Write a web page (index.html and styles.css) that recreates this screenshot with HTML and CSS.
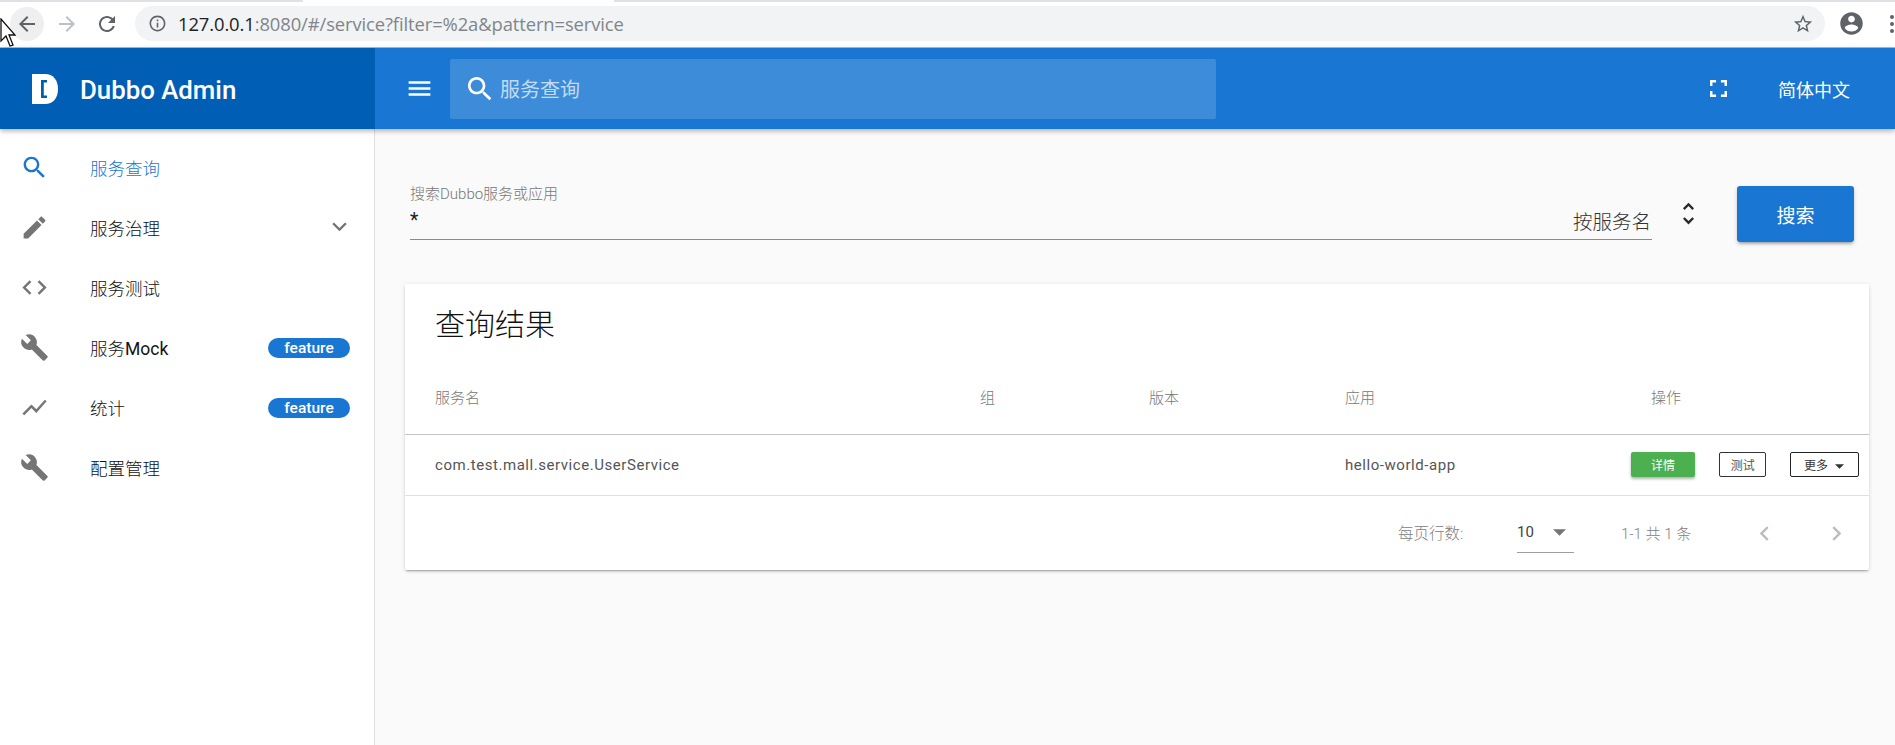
FILE: index.html
```html
<!DOCTYPE html>
<html lang="zh-CN">
<head>
<meta charset="utf-8">
<title>Dubbo Admin</title>
<link rel="stylesheet" href="styles.css">
</head>
<body>
<svg class="cursor" width="16" height="30" viewBox="0 0 16 30"><path d="M1 1v22l5-5 4 10 3-1-4-10h6z" fill="#fff" stroke="#111" stroke-width="1.3"/></svg>
<div class="tabstrip"><div class="tab-active"></div></div>
<div class="toolbar">
  <span class="nav nav-back"><svg viewBox="0 0 24 24" class="ic22"><path d="M20 11H7.83l5.59-5.59L12 4l-8 8 8 8 1.41-1.41L7.83 13H20v-2z"/></svg></span>
  <span class="nav nav-fwd"><svg viewBox="0 0 24 24" class="ic22"><path d="M12 4l-1.41 1.41L16.17 11H4v2h12.17l-5.58 5.59L12 20l8-8z"/></svg></span>
  <span class="nav nav-reload"><svg viewBox="0 0 24 24" class="ic22"><path d="M17.65 6.35C16.2 4.9 14.21 4 12 4c-4.42 0-7.99 3.58-7.99 8s3.57 8 7.99 8c3.73 0 6.84-2.55 7.73-6h-2.08c-.82 2.33-3.04 4-5.65 4-3.31 0-6-2.69-6-6s2.69-6 6-6c1.66 0 3.14.69 4.22 1.78L13 11h7V4l-2.35 2.35z"/></svg></span>
  <div class="omnibox">
    <svg viewBox="0 0 24 24" class="ic-info"><path d="M11 7h2v2h-2zm0 4h2v6h-2zm1-9C6.48 2 2 6.48 2 12s4.48 10 10 10 10-4.48 10-10S17.52 2 12 2zm0 18c-4.41 0-8-3.59-8-8s3.59-8 8-8 8 3.59 8 8-3.59 8-8 8z"/></svg>
    <span class="url"><span class="url-host">127.0.0.1</span>:8080/#/service?filter=%2a&amp;pattern=service</span>
    <svg viewBox="0 0 24 24" class="ic-star"><path d="M22 9.24l-7.19-.62L12 2 9.19 8.63 2 9.24l5.46 4.73L5.82 21 12 17.27 18.18 21l-1.63-7.03L22 9.24zM12 15.4l-3.76 2.27 1-4.28-3.32-2.88 4.38-.38L12 6.1l1.71 4.04 4.38.38-3.32 2.88 1 4.28L12 15.4z"/></svg>
  </div>
  <svg viewBox="0 0 24 24" class="ic-profile"><path d="M12 2C6.48 2 2 6.48 2 12s4.48 10 10 10 10-4.48 10-10S17.52 2 12 2zm0 3c1.66 0 3 1.34 3 3s-1.34 3-3 3-3-1.34-3-3 1.34-3 3-3zm0 14.2c-2.5 0-4.71-1.28-6-3.22.03-1.99 4-3.08 6-3.08 1.99 0 5.97 1.09 6 3.08-1.29 1.94-3.5 3.22-6 3.22z"/></svg>
  <span class="dots"><i></i><i></i><i></i></span>
</div>

<header class="appbar">
  <div class="brand">
    <svg class="logo" viewBox="0 0 26 30"><path d="M0 0h13c8 0 13 6 13 15s-5 15-13 15H0z" fill="#fff"/><path d="M15 6H9v18h6v-2.500h-3.200v-13H15z" fill="#005fb5"/></svg>
    <span class="brand-name">Dubbo Admin</span>
  </div>
  <div class="bar-main">
    <svg viewBox="0 0 24 24" class="ic-menu"><path d="M3 18h18v-2H3v2zm0-5h18v-2H3v2zm0-7v2h18V6H3z"/></svg>
    <div class="bar-search">
      <svg viewBox="0 0 24 24" class="ic-barsearch"><path d="M15.5 14h-.79l-.28-.27C15.41 12.59 16 11.11 16 9.5 16 5.91 13.09 3 9.5 3S3 5.910 3 9.500 5.910 16 9.500 16c1.610 0 3.090-.59 4.230-1.570l.27.28v.79l5 4.990L20.490 19l-4.990-5zm-6 0C7.010 14 5 11.990 5 9.500S7.010 5 9.500 5 14 7.010 14 9.500 11.990 14 9.500 14z"/></svg>
      <span class="bar-search-text">服务查询</span>
    </div>
    <svg viewBox="0 0 24 24" class="ic-full"><path d="M7 14H5v5h5v-2H7v-3zm-2-4h2V7h3V5H5v5zm12 7h-3v2h5v-5h-2v3zM14 5v2h3v3h2V5h-5z"/></svg>
    <span class="lang">简体中文</span>
  </div>
</header>

<div class="layout">
  <nav class="sidebar">
    <a class="item active">
      <svg viewBox="0 0 24 24" class="ic-nav"><path d="M15.5 14h-.79l-.28-.27C15.41 12.59 16 11.11 16 9.5 16 5.91 13.09 3 9.5 3S3 5.910 3 9.500 5.910 16 9.500 16c1.610 0 3.090-.59 4.230-1.570l.27.28v.79l5 4.990L20.490 19l-4.990-5zm-6 0C7.010 14 5 11.990 5 9.500S7.010 5 9.500 5 14 7.010 14 9.500 11.990 14 9.500 14z"/></svg>
      <span class="item-text">服务查询</span>
    </a>
    <a class="item">
      <svg viewBox="0 0 24 24" class="ic-nav"><path d="M3 17.25V21h3.750L17.810 9.940l-3.750-3.750L3 17.250zM20.710 7.040c.39-.39.39-1.020 0-1.410l-2.340-2.340c-.39-.39-1.020-.39-1.410 0l-1.830 1.830 3.750 3.750 1.830-1.830z"/></svg>
      <span class="item-text">服务治理</span>
      <svg viewBox="0 0 24 24" class="ic-chev"><path d="M16.590 8.590L12 13.170 7.410 8.590 6 10l6 6 6-6z"/></svg>
    </a>
    <a class="item">
      <svg viewBox="0 0 24 24" class="ic-nav"><path d="M9.400 16.600L4.800 12l4.600-4.600L8 6l-6 6 6 6 1.400-1.400zm5.200 0l4.600-4.600-4.600-4.600L16 6l6 6-6 6-1.400-1.400z"/></svg>
      <span class="item-text">服务测试</span>
    </a>
    <a class="item">
      <svg viewBox="0 0 24 24" class="ic-nav"><path d="M22.700 19l-9.100-9.100c.9-2.300.4-5-1.500-6.900-2-2-5-2.400-7.400-1.300L9 6 6 9 1.600 4.700C.4 7.100.9 10.100 2.900 12.100c1.900 1.900 4.600 2.400 6.900 1.500l9.100 9.100c.4.4 1 .4 1.400 0l2.300-2.300c.5-.4.5-1.100.1-1.400z"/></svg>
      <span class="item-text">服务<span class="latin">Mock</span></span>
      <span class="badge">feature</span>
    </a>
    <a class="item">
      <svg viewBox="0 0 24 24" class="ic-nav"><path d="M3.500 18.490l6-6.010 4 4L22 6.920l-1.410-1.410-7.090 7.970-4-4L2 16.990z"/></svg>
      <span class="item-text">统计</span>
      <span class="badge">feature</span>
    </a>
    <a class="item">
      <svg viewBox="0 0 24 24" class="ic-nav"><path d="M22.700 19l-9.100-9.100c.9-2.300.4-5-1.500-6.900-2-2-5-2.400-7.400-1.300L9 6 6 9 1.600 4.700C.4 7.100.9 10.100 2.900 12.100c1.900 1.900 4.600 2.400 6.900 1.500l9.100 9.100c.4.4 1 .4 1.400 0l2.300-2.300c.5-.4.5-1.100.1-1.400z"/></svg>
      <span class="item-text">配置管理</span>
    </a>
  </nav>

  <main class="content">
    <section class="search-row">
      <div class="field">
        <label class="field-label">搜索Dubbo服务或应用</label>
        <div class="field-line">
          <span class="field-value">*</span>
          <span class="field-select">按服务名</span>
        </div>
      </div>
      <svg viewBox="0 0 24 24" class="ic-unfold"><path d="M12 5.830L15.170 9l1.410-1.410L12 3 7.410 7.590 8.830 9 12 5.830zm0 12.340L8.830 15l-1.410 1.410L12 21l4.590-4.590L15.170 15 12 18.170z"/></svg>
      <button class="btn-search">搜索</button>
    </section>

    <section class="card">
      <h2 class="card-title">查询结果</h2>
      <table class="table">
        <colgroup><col class="c1"><col class="c2"><col class="c3"><col class="c4"><col class="c5"></colgroup>
        <thead>
          <tr><th>服务名</th><th>组</th><th>版本</th><th>应用</th><th class="th-op">操作</th></tr>
        </thead>
        <tbody>
          <tr>
            <td>com.test.mall.service.UserService</td><td></td><td></td><td>hello-world-app</td>
            <td class="td-op">
              <button class="mini mini-green">详情</button>
              <button class="mini mini-test">测试</button>
              <button class="mini mini-more">更多<svg viewBox="0 0 10 5" class="mini-caret"><path d="M0 0h10L5 5z"/></svg></button>
            </td>
          </tr>
        </tbody>
      </table>
      <div class="pager">
        <span class="pager-label">每页行数:</span>
        <span class="pager-select"><span>10</span><svg viewBox="0 0 14 7" class="pager-caret"><path d="M0 0h14L7 7z"/></svg></span>
        <span class="pager-range">1-1 共 1 条</span>
        <svg viewBox="0 0 24 24" class="ic-page pg-prev"><path d="M15.410 7.410L14 6l-6 6 6 6 1.410-1.410L10.830 12z"/></svg>
        <svg viewBox="0 0 24 24" class="ic-page pg-next"><path d="M10 6L8.590 7.410 13.170 12l-4.580 4.590L10 18l6-6z"/></svg>
      </div>
    </section>
  </main>
</div>
</body>
</html>
```
FILE: styles.css
```css
* { box-sizing: border-box; }
html, body { margin: 0; padding: 0; }
body {
  width: 1895px;
  height: 745px;
  overflow: hidden;
  position: relative;
  background: #fafafa;
  font-family: Roboto, "Noto Sans CJK SC", sans-serif;
  color: #212121;
}
.cursor { position: absolute; left: 0; top: 18px; z-index: 5; }

.tabstrip { height: 2px; background: #dee1e6; padding-left: 303px; }
.tab-active { width: 311px; height: 2px; background: #fff; }
.toolbar {
  height: 46px;
  background: #fff;
  border-bottom: 1px solid #b8babd;
  display: flex;
  align-items: center;
  padding-left: 10px;
}
.nav { width: 34px; height: 34px; border-radius: 50%; display: flex; align-items: center; justify-content: center; margin-right: 6px; fill: #5f6368; margin-top: -2px; }
.nav-back { background: #efefef; }
.nav-fwd { fill: #bdc1c6; }
.nav-reload { margin-right: 7px; }
.ic22 { width: 24px; height: 24px; }
.omnibox {
  margin-left: 4px;
  width: 1690px;
  height: 35px;
  margin-top: -2px;
  background: #f1f3f4;
  border-radius: 18px;
  display: flex;
  align-items: center;
  padding-left: 13px;
  padding-right: 11px;
}
.ic-info { width: 19px; height: 19px; fill: #5f6368; }
.url { margin-left: 11px; font-family: "Open Sans", sans-serif; font-size: 18.400px; color: #80868b; letter-spacing: -0.1px; flex: 1; white-space: nowrap; }
.url-host { color: #202124; }
.ic-star { width: 22px; height: 22px; fill: #5f6368; }
.ic-profile { width: 27px; height: 27px; fill: #5f6368; margin-left: 13px; margin-top: -2px; }
.dots { display: flex; flex-direction: column; gap: 3px; margin-left: 25px; margin-top: -2px; }
.dots i { width: 4px; height: 4px; background: #5f6368; border-radius: 50%; }

.appbar {
  height: 81px;
  display: flex;
  background: #1976d2;
  box-shadow: 0 2px 5px rgba(0,0,0,.3);
  position: relative;
  z-index: 2;
  color: #fff;
}
.brand { width: 375px; background: #005fb5; display: flex; align-items: center; padding-left: 32px; }
.logo { width: 26px; height: 30px; }
.brand-name { margin-left: 22px; font-size: 25.800px; font-weight: 500; white-space: nowrap; padding-top: 3px; }
.bar-main { flex: 1; display: flex; align-items: center; }
.ic-menu { width: 29px; height: 29px; fill: #fff; margin-left: 30px; }
.bar-search {
  margin-left: 16px;
  width: 766px;
  height: 60px;
  background: rgba(255,255,255,.16);
  border-radius: 2px;
  display: flex;
  align-items: center;
  padding-left: 14px;
}
.ic-barsearch { width: 32px; height: 32px; fill: #fff; }
.bar-search-text { margin-left: 4px; font-size: 20px; color: rgba(255,255,255,.7); }
.ic-full { width: 29px; height: 29px; fill: #fff; margin-left: 488px; }
.lang { margin-left: 45px; font-size: 18px; }

.layout { display: flex; height: 616px; }
.sidebar {
  width: 375px;
  flex: none;
  background: #fff;
  border-right: 1px solid #e0e0e0;
  padding-top: 8px;
}
.item { height: 60px; display: flex; align-items: center; padding-left: 20px; position: relative; }
.ic-nav { width: 29px; height: 29px; fill: #757575; flex: none; }
.item-text { margin-left: 41px; font-size: 17.500px; color: #111; font-weight: 300; }
.latin { font-weight: 400; }
.active .ic-nav { fill: #1976d2; }
.active .item-text { color: #1976d2; }
.ic-chev { width: 29px; height: 29px; fill: #757575; position: absolute; left: 325px; top: 15px; }
.badge {
  position: absolute;
  left: 268px;
  top: 21px;
  width: 82px;
  height: 20px;
  border-radius: 10px;
  background: #1976d2;
  color: #fff;
  font-size: 15.500px;
  font-weight: 500;
  text-align: center;
  line-height: 20px;
}

.content { flex: 1; padding: 58px 26px 0 30px; }
.search-row { display: flex; height: 97px; padding-left: 5px; }
.field { width: 1242px; height: 53px; border-bottom: 1px solid #8a8a8a; position: relative; }
.field-label { display: block; font-size: 15px; color: #777; line-height: 16px; margin-top: -1px; font-weight: 300; }
.field-line { display: flex; justify-content: space-between; align-items: center; height: 30px; margin-top: 3px; }
.field-value { font-size: 19.500px; color: #212121; }
.field-select { font-size: 19.500px; color: #333; margin-right: 1px; font-weight: 300; }
.ic-unfold { width: 29px; height: 29px; fill: #2a2a2a; margin-left: 22px; margin-top: 12px; flex: none; }
.btn-search {
  margin-left: 34px;
  margin-top: -1px;
  width: 117px;
  height: 56px;
  background: #1976d2;
  color: #fff;
  border: 0;
  border-radius: 3px;
  font-family: inherit;
  font-size: 19px;
  box-shadow: 0 3px 3px -2px rgba(0,0,0,.3), 0 2px 4px rgba(0,0,0,.18);
}

.card {
  background: #fff;
  border-radius: 2px;
  height: 286px;
  box-shadow: 0 2px 2px -1px rgba(0,0,0,.3), 0 1px 4px rgba(0,0,0,.14);
}
.card-title { margin: 0; height: 78px; padding: 19px 0 0 30px; font-size: 30px; font-weight: 300; color: #111; line-height: 44px; }
.table { width: 100%; border-collapse: collapse; table-layout: fixed; }
.c1 { width: 545px; }
.c2 { width: 169px; }
.c3 { width: 196px; }
.c4 { width: 316px; }
th { height: 72px; text-align: left; font-size: 15px; font-weight: 300; color: #777; border-bottom: 1px solid #c4c4c4; padding: 0 0 3px 30px; }
td { height: 61px; font-size: 15px; letter-spacing: .55px; color: #555; border-bottom: 1px solid #e0e0e0; padding: 0 0 0 30px; white-space: nowrap; }
.th-op { padding-left: 0; text-indent: 20px; }
.td-op { padding-left: 0; }
.mini {
  height: 25px;
  padding: 0;
  font-family: inherit;
  font-size: 12px;
  border-radius: 2px;
  vertical-align: middle;
  letter-spacing: 0;
}
.mini-green { width: 64px; background: #4caf50; color: #fff; border: 0; box-shadow: 0 2px 3px rgba(0,0,0,.3); }
.mini-test { width: 47px; background: #fff; color: #555; border: 1px solid #333; margin-left: 20px; }
.mini-more { width: 69px; background: #fff; color: #333; border: 1px solid #222; margin-left: 19px; }
.mini-caret { width: 9px; height: 5px; margin-left: 7px; fill: #333; vertical-align: middle; }
.pager { display: flex; align-items: center; height: 73px; position: relative; padding-left: 993px; font-size: 15px; color: #808080; }
.pager-label { width: 119px; font-weight: 300; font-size: 15.500px; }
.pager-select { width: 57px; height: 40px; border-bottom: 1px solid #9e9e9e; display: flex; align-items: center; color: #424242; margin-top: 1px; }
.pager-caret { width: 13px; height: 7px; margin-left: 19px; fill: #757575; }
.pager-range { margin-left: 47px; font-weight: 300; }
.ic-page { position: absolute; width: 29px; height: 29px; fill: #bdbdbd; top: 23px; }
.pg-prev { left: 1345px; }
.pg-next { left: 1417px; }
```
